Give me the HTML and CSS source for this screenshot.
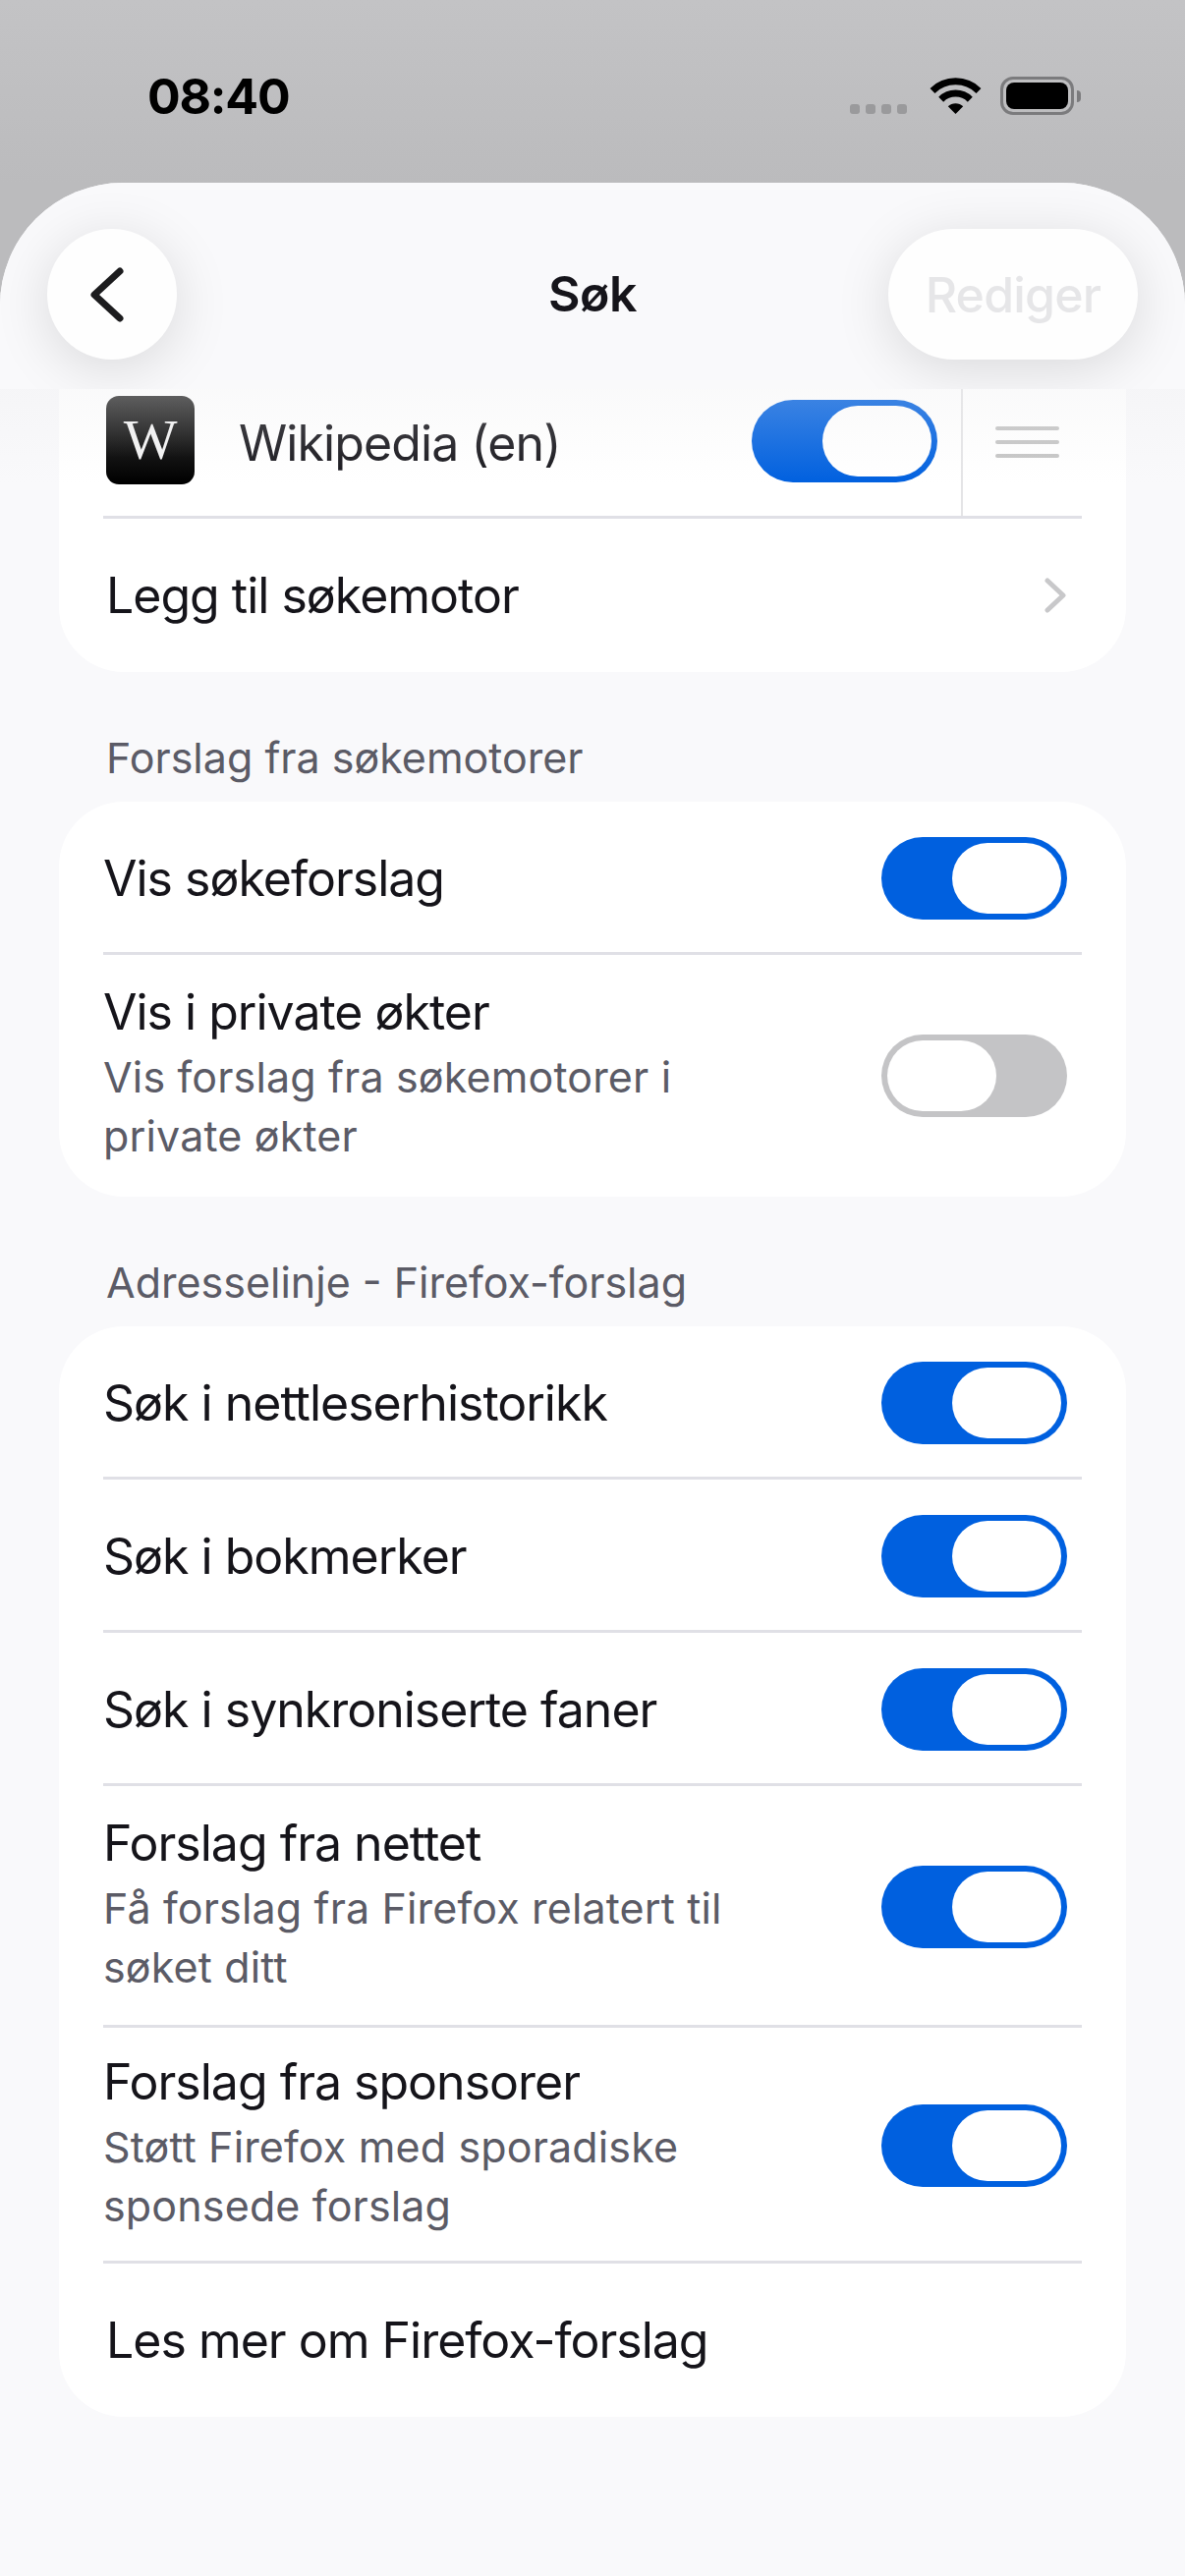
FILE: index.html
```html
<!DOCTYPE html>
<html lang="nb">
<head>
    <meta charset="UTF-8">
    <meta name="viewport" content="width=device-width, initial-scale=1.0">
    <title>Søk</title>
    <link rel="stylesheet" href="styles.css">
</head>
<body>
    <div class="status-bar">
        <div class="time">08:40</div>
        <div class="status-icons">
            <div class="signal"><span></span><span></span><span></span><span></span></div>
            <svg class="wifi" viewBox="0 0 55 37">
                <path d="M4 13.5A33.5 33.5 0 0 1 51 13.5" fill="none" stroke="#000" stroke-width="7"/>
                <path d="M12.7 22.2A21 21 0 0 1 42.3 22.2" fill="none" stroke="#000" stroke-width="7"/>
                <path d="M27.5 37L19.8 29.3A11 11 0 0 1 35.2 29.3Z" fill="#000"/>
            </svg>
            <div class="battery"><div class="battery-body"><div class="battery-fill"></div></div><div class="battery-nub"></div></div>
        </div>
    </div>

    <div class="sheet">
        <div class="nav">
            <div class="nav-button back-button">
                <svg class="back-icon" viewBox="0 0 38 58"><polyline points="32,5 6,29 32,53" fill="none" stroke="#1c1c1e" stroke-width="7" stroke-linecap="round" stroke-linejoin="round"/></svg>
            </div>
            <div class="nav-title">Søk</div>
            <div class="nav-button edit-button">Rediger</div>
        </div>
        <div class="nav-fade"></div>

        <div class="content">
            <div class="card card-scrolled">
                <div class="row engine-row">
                    <div class="engine-icon">W</div>
                    <div class="engine-name">Wikipedia (en)</div>
                    <div class="toggle"><div class="thumb"></div></div>
                    <div class="drag-cell">
                        <div class="drag-handle"><span></span><span></span><span></span></div>
                    </div>
                </div>
                <div class="row row-link">
                    <div class="row-title">Legg til søkemotor</div>
                    <svg class="chevron" viewBox="0 0 22 36"><polyline points="3,3 19,18 3,33" fill="none" stroke="#c8c8ca" stroke-width="5" stroke-linecap="round" stroke-linejoin="round"/></svg>
                </div>
            </div>

            <div class="section-title">Forslag fra søkemotorer</div>
            <div class="card">
                <div class="row">
                    <div class="row-title">Vis søkeforslag</div>
                    <div class="toggle"><div class="thumb"></div></div>
                </div>
                <div class="row row-tall">
                    <div class="row-text">
                        <div class="row-title">Vis i private økter</div>
                        <div class="row-sub">Vis forslag fra søkemotorer i private økter</div>
                    </div>
                    <div class="toggle toggle-off"><div class="thumb"></div></div>
                </div>
            </div>

            <div class="section-title">Adresselinje - Firefox-forslag</div>
            <div class="card">
                <div class="row">
                    <div class="row-title">Søk i nettleserhistorikk</div>
                    <div class="toggle"><div class="thumb"></div></div>
                </div>
                <div class="row">
                    <div class="row-title">Søk i bokmerker</div>
                    <div class="toggle"><div class="thumb"></div></div>
                </div>
                <div class="row">
                    <div class="row-title">Søk i synkroniserte faner</div>
                    <div class="toggle"><div class="thumb"></div></div>
                </div>
                <div class="row row-tall">
                    <div class="row-text">
                        <div class="row-title">Forslag fra nettet</div>
                        <div class="row-sub">Få forslag fra Firefox relatert til søket ditt</div>
                    </div>
                    <div class="toggle"><div class="thumb"></div></div>
                </div>
                <div class="row row-tall row-compact">
                    <div class="row-text">
                        <div class="row-title">Forslag fra sponsorer</div>
                        <div class="row-sub">Støtt Firefox med sporadiske sponsede forslag</div>
                    </div>
                    <div class="toggle"><div class="thumb"></div></div>
                </div>
                <div class="row row-link">
                    <div class="row-title">Les mer om Firefox-forslag</div>
                </div>
            </div>
        </div>
    </div>
</body>
</html>
```

FILE: styles.css
```css
* {
    box-sizing: border-box;
}
body {
    font-family: Inter, "Noto Sans", sans-serif;
    margin: 0;
    width: 1206px;
    height: 2622px;
    overflow: hidden;
    background: linear-gradient(#c3c3c5, #bbbbbd 186px);
    color: #15141a;
}

/* status bar */
.status-bar {
    height: 186px;
    padding: 73px 106px 0 150px;
    display: flex;
    justify-content: space-between;
    align-items: flex-start;
}
.time {
    font-size: 50px;
    line-height: 50px;
    font-weight: 700;
    letter-spacing: -1.2px;
    color: #000;
}
.status-icons {
    display: flex;
    align-items: flex-end;
    margin-top: 5px;
}
.signal {
    display: flex;
    gap: 6px;
    margin-bottom: 1px;
    margin-right: 22px;
}
.signal span {
    width: 10px;
    height: 10px;
    border-radius: 3px;
    background: #9a9a9c;
}
.wifi {
    width: 55px;
    height: 37px;
    margin-bottom: 1px;
    margin-right: 18px;
}
.battery {
    display: flex;
    align-items: center;
    gap: 3px;
}
.battery-body {
    width: 75px;
    height: 39px;
    padding: 3px;
    border: 3px solid #7b7b7d;
    border-radius: 13px;
}
.battery-fill {
    height: 100%;
    background: #000;
    border-radius: 8px;
}
.battery-nub {
    width: 4px;
    height: 12px;
    background: #7b7b7d;
    border-radius: 0 4px 4px 0;
}

/* sheet and nav */
.sheet {
    position: relative;
    height: 2436px;
    background: #f9f9fb;
    border-radius: 125px 125px 0 0;
    overflow: hidden;
}
.nav {
    position: relative;
    z-index: 2;
    height: 210px;
    padding: 47px 48px 0;
    display: grid;
    grid-template-columns: 1fr auto 1fr;
    align-items: start;
    background: #f9f9fb;
    overflow: hidden;
}
.nav-button {
    height: 133px;
    display: flex;
    align-items: center;
    justify-content: center;
    background: #fefefe;
    border-radius: 67px;
    box-shadow: 0 10px 56px rgba(0, 0, 0, 0.13);
}
.back-button {
    width: 132px;
    justify-self: start;
}
.back-icon {
    width: 38px;
    height: 58px;
    margin-right: 10px;
}
.edit-button {
    justify-self: end;
    width: 254px;
    font-size: 50px;
    font-weight: 500;
    letter-spacing: -0.8px;
    color: #e6e6e8;
}
.nav-title {
    height: 133px;
    line-height: 133px;
    font-size: 50px;
    font-weight: 600;
    letter-spacing: -0.5px;
}
.nav-fade {
    position: absolute;
    z-index: 1;
    left: 0;
    right: 0;
    top: 210px;
    height: 96px;
    background: linear-gradient(rgba(236, 236, 238, 0.28), rgba(236, 236, 238, 0));
}

/* settings list */
.content {
    margin-top: -24px;
    padding: 0 60px;
}
.card {
    background: #fff;
    border-radius: 66px;
    padding: 0 45px;
}
.card-scrolled {
    border-radius: 0 0 66px 66px;
}
.section-title {
    margin: 60px 0 18px;
    padding-left: 48px;
    font-size: 43px;
    line-height: 54px;
    color: #5b5b66;
}
.row {
    height: 156px;
    display: flex;
    align-items: center;
    justify-content: space-between;
    box-shadow: inset 0 -3px 0 #e0e0e6;
}
.row:last-child {
    box-shadow: none;
}
.row-link .row-title {
    padding-left: 3px;
}
.row-title {
    font-size: 50px;
    line-height: 66px;
    letter-spacing: -1px;
}
.row-tall {
    height: 246px;
}
.row-compact {
    height: 240px;
}
.row-text {
    max-width: 680px;
    padding-bottom: 8px;
}
.row-sub {
    margin-top: 3px;
    font-size: 43px;
    line-height: 60px;
    letter-spacing: 0.15px;
    color: #5b5b66;
}
.toggle {
    flex: none;
    width: 189px;
    height: 84px;
    margin-right: 15px;
    padding: 6px;
    display: flex;
    justify-content: flex-end;
    background: #0060df;
    border-radius: 42px;
}
.toggle-off {
    justify-content: flex-start;
    background: #c4c4c6;
}
.thumb {
    width: 111px;
    height: 72px;
    background: #fff;
    border-radius: 36px;
}
.chevron {
    width: 22px;
    height: 36px;
    margin-right: 16px;
}

/* engine row */
.engine-row {
    align-items: stretch;
}
.engine-icon {
    flex: none;
    width: 90px;
    height: 90px;
    margin: 31px 48px 0 3px;
    background: linear-gradient(#2c2c2c, #000 70%);
    border-radius: 13px;
    font-family: "Liberation Serif", serif;
    font-size: 58px;
    line-height: 90px;
    text-align: center;
    color: #f2f2f2;
}
.engine-name {
    flex: 1;
    padding-top: 46px;
    font-size: 50px;
    line-height: 66px;
    letter-spacing: -0.9px;
    margin-left: -3px;
}
.engine-row .toggle {
    margin: 35px 24px 0 0;
}
.drag-cell {
    flex: none;
    width: 123px;
    height: 153px;
    padding: 62px 0 0 33px;
    border-left: 2px solid #e4e4e6;
}
.drag-handle {
    width: 65px;
    display: flex;
    flex-direction: column;
    gap: 10px;
}
.drag-handle span {
    height: 4px;
    background: #c4c4c4;
    border-radius: 2px;
}
```
